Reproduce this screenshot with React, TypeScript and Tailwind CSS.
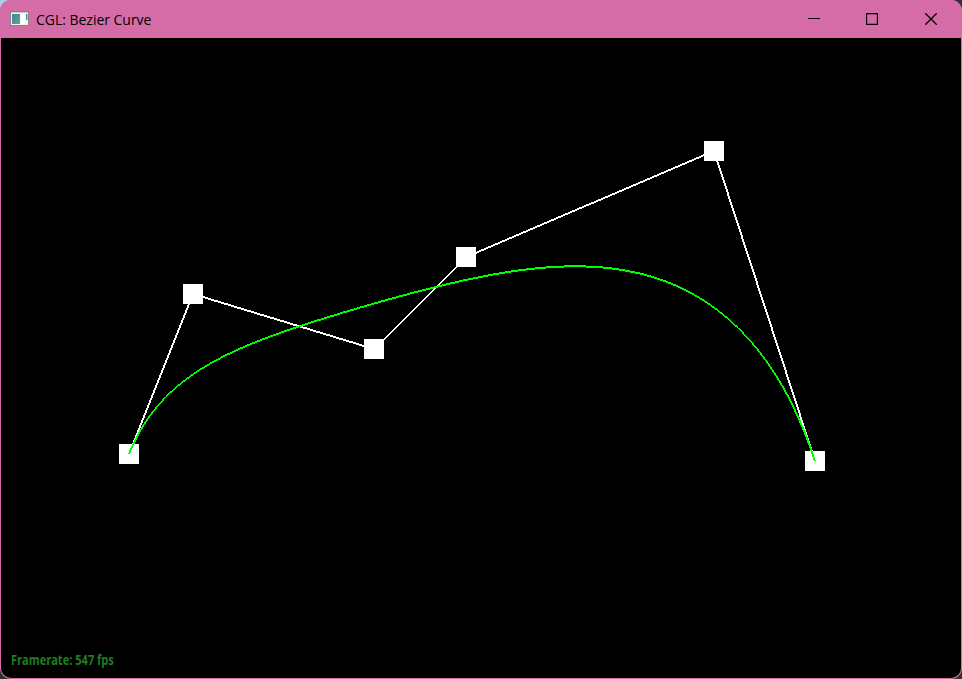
type Point = [number, number];

const controls: Point[] = [
  [129, 416],
  [193, 256],
  [374, 311],
  [466, 219],
  [714, 113],
  [815, 423],
];

function bezier(points: Point[], t: number): Point {
  let p = points;
  while (p.length > 1) {
    p = p.slice(1).map((b, i): Point => [
      p[i][0] * (1 - t) + b[0] * t,
      p[i][1] * (1 - t) + b[1] * t,
    ]);
  }
  return p[0];
}

// A two-pixel line, widened along its minor axis as a rasterizer does.
function strip(points: Point[]): string {
  return points
    .slice(1)
    .map((b, i) => {
      const a = points[i];
      const steep = Math.abs(b[1] - a[1]) > Math.abs(b[0] - a[0]);
      const dx = steep ? 1 : 0;
      const dy = steep ? 0 : 1;
      return `M${a[0] - dx} ${a[1] - dy}L${b[0] - dx} ${b[1] - dy}L${b[0] + dx} ${b[1] + dy}L${a[0] + dx} ${a[1] + dy}Z`;
    })
    .join("");
}

const curve = Array.from({ length: 101 }, (_, i) => bezier(controls, i / 100));

function AppIcon() {
  return (
    <svg className="ml-[10px] h-4 w-5 shrink-0" viewBox="0 0 20 16">
      <defs>
        <linearGradient id="pane" x1="0" y1="0" x2="1" y2="1">
          <stop offset="0" stopColor="#427fa5" />
          <stop offset="1" stopColor="#5bad7d" />
        </linearGradient>
      </defs>
      <rect x="0.5" y="0.5" width="18" height="14" fill="#f4f4f4" stroke="#8d8088" />
      <rect x="1" y="1" width="17" height="1" fill="#c9cdd0" />
      <rect x="2" y="3" width="8" height="10" fill="url(#pane)" />
      <rect x="11" y="3" width="4" height="10" fill="#fff" />
      <rect x="16" y="3" width="1.5" height="6" fill="url(#pane)" />
    </svg>
  );
}

function TitleBar() {
  return (
    <header className="flex h-[38px] shrink-0 items-center bg-[#d56ca7] text-black">
      <AppIcon />
      <h1 className="ml-[6px] h-5 flex-1 origin-left scale-x-[0.93] whitespace-nowrap font-['Open_Sans',sans-serif] text-[15px] leading-5">
        CGL: Bezier Curve
      </h1>
      <button aria-label="Minimize" className="flex h-full w-[58px] items-center justify-center">
        <svg className="h-3 w-3" viewBox="0 0 12 12" shapeRendering="crispEdges">
          <path d="M0 5.5H12" stroke="currentColor" />
        </svg>
      </button>
      <button aria-label="Maximize" className="flex h-full w-[58px] items-center justify-center">
        <svg className="h-3 w-3" viewBox="0 0 12 12" fill="none">
          <rect x="0.5" y="0.5" width="11" height="11" rx="1" stroke="currentColor" strokeWidth="1.3" />
        </svg>
      </button>
      <button aria-label="Close" className="mr-[2px] flex h-full w-[59px] items-center justify-center">
        <svg className="h-3 w-3" viewBox="0 0 12 12">
          <path d="M0.3 0.3L11.7 11.7M11.7 0.3L0.3 11.7" stroke="currentColor" strokeWidth="1.3" />
        </svg>
      </button>
    </header>
  );
}

export default function App() {
  return (
    <div className="h-[679px] w-[962px] overflow-hidden bg-[#303030]">
      <div className="h-full bg-[linear-gradient(135deg,#a9cde8_20px,transparent_20px)]">
        <main className="flex h-full flex-col overflow-hidden rounded-[11px] bg-[#d56ca7]">
          <TitleBar />
          <section className="relative mx-px mb-px flex-1 overflow-hidden rounded-b-[10px] bg-black">
            <svg className="block h-[640px] w-[960px]" viewBox="1 0 960 640" shapeRendering="crispEdges">
              <path d={strip(controls)} fill="white" />
              {controls.map(([x, y]) => (
                <rect key={x} x={x - 10} y={y - 10} width="20" height="20" fill="white" />
              ))}
              <path d={strip(curve)} fill="#00ff00" />
            </svg>
            <p className="absolute bottom-[8px] left-[9.5px] origin-left scale-x-[0.79] whitespace-nowrap font-['Open_Sans',sans-serif] text-[14px] font-bold leading-5 text-[#217d21]">
              Framerate: 547 fps
            </p>
          </section>
        </main>
      </div>
    </div>
  );
}
